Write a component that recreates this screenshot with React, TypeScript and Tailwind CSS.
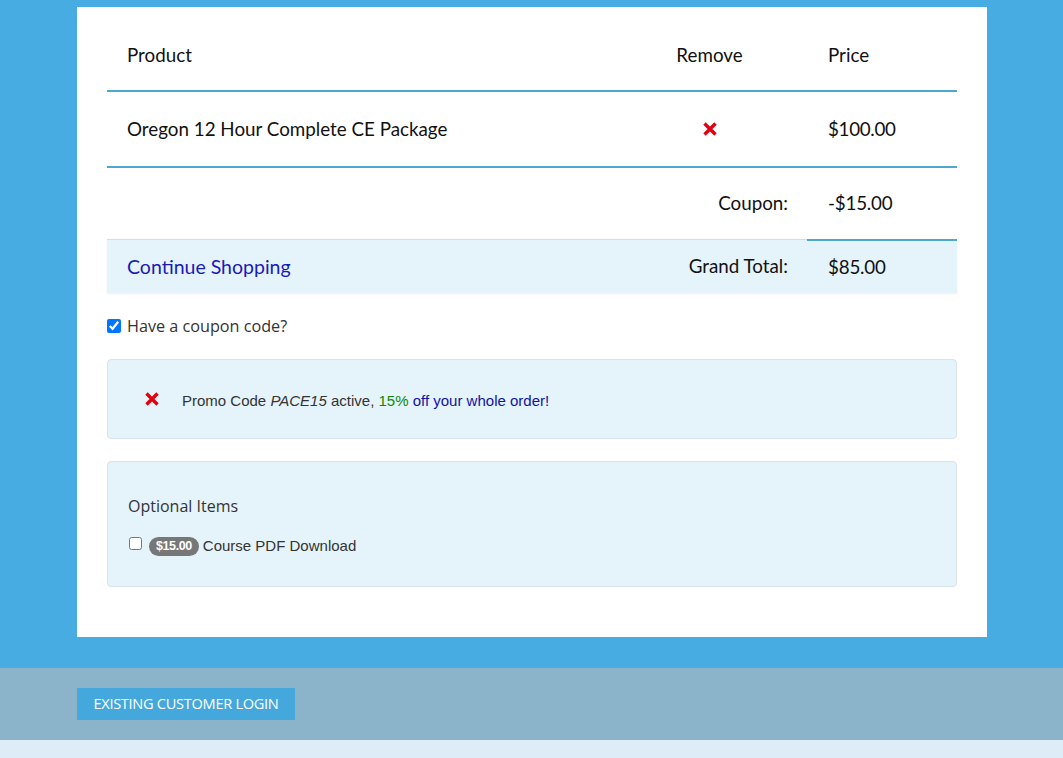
import React from "react";

function RedX({ size = 16 }: { size?: number }) {
  return (
    <svg width={size} height={size} viewBox="0 0 16 16">
      <path d="M2.5 2.5 L13.5 13.5 M13.5 2.5 L2.5 13.5" stroke="#e3000f" strokeWidth="3.4" strokeLinecap="butt" />
    </svg>
  );
}

export default function App() {
  const tf = { fontFamily: "Lato, 'Open Sans', sans-serif" };
  return (
    <div className="w-[1063px] h-[758px] overflow-hidden bg-[#46ace1] flex flex-col" style={{ fontFamily: "Lato, sans-serif" }}>
      <div className="pt-[7px] pl-[77px]">
        <div className="w-[910px] h-[630px] bg-white px-[30px] pt-[13px] flex flex-col">
          {/* table */}
          <div className="flex flex-col text-[18.8px] text-[#111]" style={tf}>
            <div className="flex h-[72px] items-center border-b-2 border-[#4ea7d2]">
              <div className="w-[505px] pl-[20px]">Product</div>
              <div className="w-[195px] text-center">Remove</div>
              <div className="w-[150px] pl-[21px]">Price</div>
            </div>
            <div className="flex h-[76px] items-center border-b-2 border-[#4ea7d2]">
              <div className="w-[505px] pl-[20px]">Oregon 12 Hour Complete CE Package</div>
              <div className="w-[195px] flex justify-center"><RedX /></div>
              <div className="w-[150px] pl-[21px] tracking-[-0.3px]">$100.00</div>
            </div>
            <div className="flex h-[71px] items-center">
              <div className="w-[700px] text-right pr-[19px]">Coupon:</div>
              <div className="w-[150px] pl-[21px] tracking-[-0.2px]">-$15.00</div>
            </div>
            <div className="flex h-[54px] items-center bg-[#e5f3fa] shadow-[0_1px_2px_rgba(0,0,0,0.06)]">
              <div className="w-[505px] h-full pl-[20px] flex items-center border-t border-[#d6dde2] text-[#1a1ab8] text-[19.5px]">Continue Shopping</div>
              <div className="w-[195px] h-full flex items-center justify-end pr-[19px] border-t border-[#d6dde2]">Grand Total:</div>
              <div className="w-[150px] h-full pl-[21px] flex items-center border-t-2 border-[#4ea7d2] tracking-[-0.2px]">$85.00</div>
            </div>
          </div>

          <label className="flex items-center gap-[6px] mt-[24px] text-[16.2px] text-[#333]" style={{ fontFamily: "'Open Sans', sans-serif" }}>
            <input type="checkbox" defaultChecked className="w-[14px] h-[14px] m-0 accent-[#0075ff]" />
            <span className="leading-[18px]">Have a coupon code?</span>
          </label>

          <div className="mt-[24px] h-[80px] rounded-[4px] border border-[#d9e3e8] bg-[#e5f3fa] flex items-center pl-[36px] pt-[4px]" style={{ fontFamily: "'Liberation Sans', Arial, sans-serif" }}>
            <div className="w-[16px] flex justify-center -mt-[4px]"><RedX size={16} /></div>
            <div className="ml-[22px] text-[15px] text-[#333]">
              Promo Code <i>PACE15</i> active, <span className="text-[#0a8a0a]">15%</span> <span className="text-[#1212a8]">off your whole order!</span>
            </div>
          </div>

          <div className="mt-[22px] h-[126px] rounded-[4px] border border-[#d9e3e8] bg-[#e5f3fa] pl-[20px] pt-[32px]">
            <div className="text-[16px] text-[#333]" style={{ fontFamily: "'Open Sans', sans-serif" }}>Optional Items</div>
            <div className="mt-[17px] flex items-center text-[15px] text-[#333]" style={{ fontFamily: "'Liberation Sans', Arial, sans-serif" }}>
              <input type="checkbox" className="w-[13px] h-[13px] m-0 ml-[1px] -mt-[6px]" />
              <span className="ml-[7px] rounded-[10px] bg-[#777] text-white font-bold text-[12.5px] px-[7px] h-[19px] leading-[19px] tracking-[-0.4px]">$15.00</span>
              <span className="ml-[4px]">Course PDF Download</span>
            </div>
          </div>
        </div>
      </div>
      <div className="h-[31px]" />
      <div className="h-[72px] bg-[#8bb4ca] pl-[77px] pt-[20px]">
        <div className="w-[218px] h-[32px] bg-[#44a8dc] text-white text-[14.6px] flex items-center justify-center tracking-[-0.3px]" style={{ fontFamily: "'Open Sans', sans-serif" }}>
          EXISTING CUSTOMER LOGIN
        </div>
      </div>
      <div className="flex-1 bg-[#ddecf7]" />
    </div>
  );
}
